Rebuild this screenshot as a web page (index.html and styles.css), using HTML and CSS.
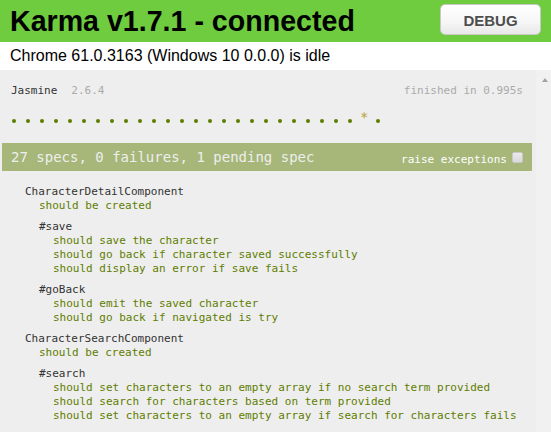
FILE: index.html
```html
<!DOCTYPE html>
<html>
<head>
<meta charset="utf-8">
<title>Karma</title>
<link rel="stylesheet" href="styles.css">
</head>
<body>
<div class="banner">
  <h1 class="title">Karma v1.7.1 - connected</h1>
  <a class="btn-debug" href="#">DEBUG</a>
</div>
<ul class="browsers"><li>Chrome 61.0.3163 (Windows 10 0.0.0) is idle</li></ul>
<div class="context">
  <div class="reporter">
    <div class="jbanner">
      <span class="jtitle">Jasmine</span><span class="jversion">2.6.4</span>
      <span class="duration">finished in 0.995s</span>
    </div>
    <ul class="symbols">
      <li class="passed"></li><li class="passed"></li><li class="passed"></li><li class="passed"></li><li class="passed"></li>
      <li class="passed"></li><li class="passed"></li><li class="passed"></li><li class="passed"></li><li class="passed"></li>
      <li class="passed"></li><li class="passed"></li><li class="passed"></li><li class="passed"></li><li class="passed"></li>
      <li class="passed"></li><li class="passed"></li><li class="passed"></li><li class="passed"></li><li class="passed"></li>
      <li class="passed"></li><li class="passed"></li><li class="passed"></li><li class="passed"></li><li class="passed"></li>
      <li class="pending">*</li><li class="passed"></li>
    </ul>
    <div class="bar">
      <span class="bar-text">27 specs, 0 failures, 1 pending spec</span>
      <span class="exceptions">raise exceptions<span class="checkbox"></span></span>
    </div>
    <div class="summary">
      <div class="suite">
        <div class="suite-detail">CharacterDetailComponent</div>
        <ul class="specs"><li>should be created</li></ul>
        <div class="suite">
          <div class="suite-detail">#save</div>
          <ul class="specs">
            <li>should save the character</li>
            <li>should go back if character saved successfully</li>
            <li>should display an error if save fails</li>
          </ul>
        </div>
        <div class="suite">
          <div class="suite-detail">#goBack</div>
          <ul class="specs">
            <li>should emit the saved character</li>
            <li>should go back if navigated is try</li>
          </ul>
        </div>
      </div>
      <div class="suite">
        <div class="suite-detail">CharacterSearchComponent</div>
        <ul class="specs"><li>should be created</li></ul>
        <div class="suite">
          <div class="suite-detail">#search</div>
          <ul class="specs">
            <li>should set characters to an empty array if no search term provided</li>
            <li>should search for characters based on term provided</li>
            <li>should set characters to an empty array if search for characters fails</li>
          </ul>
        </div>
      </div>
    </div>
  </div>
  <div class="scrollbar"><span class="arrow-up"></span></div>
</div>
</body>
</html>
```

FILE: styles.css
```css
html, body {
  margin: 0;
  padding: 0;
  height: 100%;
  overflow: hidden;
}

body {
  font-family: "Liberation Sans", Arial, sans-serif;
  color: #000;
  display: flex;
  flex-direction: column;
  background: #fff;
}

.banner {
  background-color: #6ecc3e;
  padding: 5px 10px;
  display: flex;
  justify-content: space-between;
  align-items: flex-start;
  height: 32px;
}

.title {
  margin: 0;
  padding: 0;
  font-size: 28.6px;
  line-height: 32px;
  font-weight: bold;
  color: #000;
}

.btn-debug {
  margin-top: -1px;
  width: 101px;
  height: 31px;
  box-sizing: border-box;
  display: flex;
  align-items: center;
  justify-content: center;
  border: 1px solid #c8c8c8;
  border-radius: 5px;
  background: linear-gradient(to bottom, #ffffff 0%, #f6f6f6 60%, #e8e8e8 100%);
  color: #4d4d4d;
  font-size: 15px;
  font-weight: bold;
  text-decoration: none;
  padding-top: 1px;
}

.browsers {
  margin: 0;
  padding: 5px 10px;
  list-style: none;
  font-size: 16px;
  line-height: 18px;
  color: #000;
}

.context {
  flex: 1;
  display: flex;
  min-height: 0;
}

.reporter {
  flex: 1;
  background-color: #eee;
  padding: 0 4px 0 2px;
  font-family: "DejaVu Sans Mono", "Liberation Mono", monospace;
  font-size: 11px;
  line-height: 14px;
  color: #333;
  overflow: hidden;
}

.jbanner {
  margin-top: 14px;
  padding: 0 9px;
  display: flex;
}

.jtitle {
  color: #333;
}

.jversion {
  margin-left: 14px;
  color: #aaa;
}

.duration {
  margin-left: auto;
  color: #aaa;
}

.symbols {
  list-style: none;
  margin: 13px 0 14px;
  padding: 0 9px;
  height: 18px;
  display: flex;
}

.symbols li {
  width: 14px;
  height: 18px;
  position: relative;
  flex: none;
}

.symbols li.passed::before {
  content: "";
  position: absolute;
  left: 1px;
  top: 8px;
  width: 4px;
  height: 4px;
  border-radius: 50%;
  background-color: #5e7d00;
}

.symbols li.pending {
  color: #ba9d37;
  font-size: 14px;
  line-height: 13px;
  text-indent: -1px;
}

.bar {
  background-color: #a6b779;
  color: #eee;
  height: 28px;
  padding: 0 9px;
  display: flex;
  justify-content: space-between;
  align-items: center;
}

.bar-text {
  font-size: 14px;
  line-height: 28px;
}

.exceptions {
  color: #fff;
  font-size: 11px;
  line-height: 14px;
  margin-top: 4px;
}

.checkbox {
  display: inline-block;
  width: 11px;
  height: 11px;
  margin-left: 5px;
  box-sizing: border-box;
  border: 1px solid #c9c9c9;
  border-radius: 2px;
  background: linear-gradient(to bottom, #eaeaea, #d8d8d8);
  vertical-align: baseline;
}

.summary {
  margin-top: 14px;
  padding: 0 9px;
}

.suite {
  margin: 7px 0 7px 14px;
}

.suite-detail {
  color: #333;
}

.specs {
  list-style: none;
  margin: 0 0 0 14px;
  padding: 0;
}

.specs li {
  color: #5e7d00;
}

.scrollbar {
  width: 15px;
  flex: none;
  background-color: #f1f1f1;
  padding-top: 8px;
  box-sizing: border-box;
}

.arrow-up {
  display: block;
  margin-left: 6px;
  width: 0;
  height: 0;
  border-left: 3.5px solid transparent;
  border-right: 3.5px solid transparent;
  border-bottom: 4px solid #a3a3a3;
}
```
